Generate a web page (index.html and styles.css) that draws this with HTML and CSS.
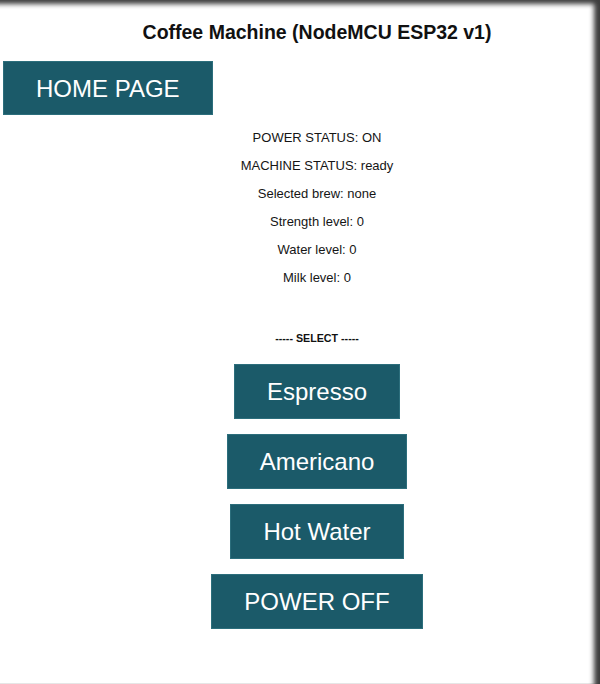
FILE: index.html
```html
<!DOCTYPE html>
<html>
<head>
<meta charset="utf-8">
<title>Coffee Machine</title>
<link rel="stylesheet" href="styles.css">
</head>
<body>
<div class="page">
  <h1 class="title">Coffee Machine (NodeMCU ESP32 v1)</h1>
  <a class="btn home">HOME PAGE</a>
  <div class="status">
    <p>POWER STATUS: ON</p>
    <p>MACHINE STATUS: ready</p>
    <p>Selected brew: none</p>
    <p>Strength level: 0</p>
    <p>Water level: 0</p>
    <p>Milk level: 0</p>
  </div>
  <div class="select">----- SELECT -----</div>
  <div class="actions">
    <a class="btn">Espresso</a>
    <a class="btn">Americano</a>
    <a class="btn">Hot Water</a>
    <a class="btn">POWER OFF</a>
  </div>
</div>
<div class="frame"></div>
</body>
</html>
```
FILE: styles.css
```css
html, body {
  margin: 0;
  padding: 0;
  background: #fff;
  overflow: hidden;
}
body {
  width: 600px;
  height: 684px;
  font-family: "Liberation Sans", Arial, sans-serif;
  color: #111;
}
.page {
  width: 600px;
  box-sizing: border-box;
  padding-left: 34px;
  display: flex;
  flex-direction: column;
  align-items: center;
}
.title {
  font-size: 19.5px;
  font-weight: bold;
  line-height: 23px;
  margin: 21px 0 0;
}
.btn {
  display: block;
  background: #1b5a69;
  color: #fff;
  font-size: 24px;
  line-height: 27px;
  padding: 13px 32px;
  text-decoration: none;
  border: 1px solid #2c6e7c;
  margin: -1px;
}
.home {
  align-self: flex-start;
  margin-left: -31px;
  margin-top: 17px;
  padding: 13px 32px 12px;
}
.status {
  margin-top: 16px;
  display: flex;
  flex-direction: column;
  align-items: center;
  gap: 13px;
  font-size: 13px;
  line-height: 15px;
  color: #151515;
}
.status p {
  margin: 0;
}
.select {
  margin-top: 47px;
  font-size: 10.7px;
  line-height: 13px;
  font-weight: bold;
}
.actions {
  margin-top: 20px;
  display: flex;
  flex-direction: column;
  align-items: center;
  gap: 17px;
}
.frame {
  position: fixed;
  left: 0;
  top: 0;
  width: 600px;
  height: 684px;
  pointer-events: none;
  box-shadow: inset -7px 5px 5px -1px rgba(40,40,40,0.9), inset 0 -1px 0 #e6e6e6;
}
```
